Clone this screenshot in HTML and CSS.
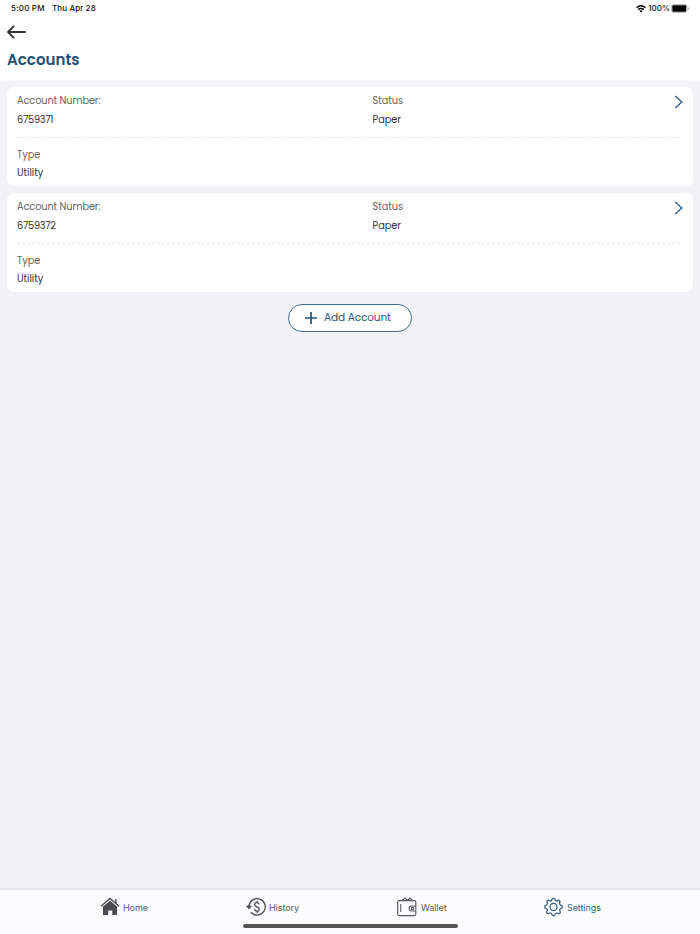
FILE: index.html
```html
<!DOCTYPE html>
<html lang="en">
<head>
<meta charset="utf-8">
<title>Accounts</title>
<link rel="stylesheet" href="styles.css">
</head>
<body>
<header class="header">
  <div class="statusbar">
    <span class="time">5:00 PM</span><span class="date">Thu Apr 28</span>
    <svg class="wifi" width="10" height="8" viewBox="0 0 10 8"><g fill="none" stroke="#000" stroke-width="1.4"><path d="M.6 2.7Q5-1 9.4 2.7M2.2 4.6Q5 2.3 7.8 4.6"/></g><path d="M3.4 5.9Q5 4.7 6.6 5.9L5 7.6z"/></svg>
    <span class="percent">100%</span>
    <svg class="battery" width="18" height="9" viewBox="0 0 18 9"><rect x=".5" y=".5" width="15.5" height="8" rx="2.2" fill="#fff" stroke="#bbb"/><rect x="1.3" y="1.3" width="13.9" height="6.4" rx="1"/><path d="M17 3v3q1-.4 1-1.5T17 3z" fill="#aaa"/></svg>
  </div>
  <svg class="back" width="19" height="14" viewBox="0 0 19 14" fill="none" stroke="#333" stroke-width="1.8" stroke-linecap="round" stroke-linejoin="round"><path d="M18 7H1.2M6.6 1.3L1 7l5.6 5.7"/></svg>
  <h1 class="title">Accounts</h1>
</header>
<main class="content">
  <section class="card">
    <div class="row">
      <div class="field"><span class="label number-label">Account Number:</span><span class="value number-value">6759371</span></div>
      <div class="field"><span class="label">Status</span><span class="value">Paper</span></div>
      <svg class="chevron" width="9" height="14" viewBox="0 0 9 14"><path d="M1.2 1l6.6 6-6.6 6" fill="none" stroke="#2a5784" stroke-width="1.3"/></svg>
    </div>
    <div class="divider"></div>
    <div class="field"><span class="label">Type</span><span class="value">Utility</span></div>
  </section>
  <section class="card">
    <div class="row">
      <div class="field"><span class="label number-label">Account Number:</span><span class="value number-value">6759372</span></div>
      <div class="field"><span class="label">Status</span><span class="value">Paper</span></div>
      <svg class="chevron" width="9" height="14" viewBox="0 0 9 14"><path d="M1.2 1l6.6 6-6.6 6" fill="none" stroke="#2a5784" stroke-width="1.3"/></svg>
    </div>
    <div class="divider"></div>
    <div class="field"><span class="label">Type</span><span class="value">Utility</span></div>
  </section>
  <button class="add"><svg width="12" height="12" viewBox="0 0 12 12"><path d="M6 0v12M0 6h12" stroke="#24517f" stroke-width="1.7"/></svg><span>Add Account</span></button>
</main>
<footer class="footer">
  <nav class="tabs">
    <a class="tab home"><svg width="20" height="19" viewBox="0 0 20 19"><path d="M3 9.6L10 3.7l7 5.9V18h-4.7v-4.6H8.2V18H3z" fill="#4b4b4d"/><path d="M.9 9.2l9.1-7.7 9.1 7.7M15.9 2v4.2" fill="none" stroke="#4b4b4d" stroke-width="1.4"/></svg><span>Home</span></a>
    <a class="tab history"><svg width="20" height="20" viewBox="0 0 20 20" fill="none" stroke="#4b4b4d" stroke-width="1.3"><path d="M2.9 9.5a8.2 8.2 0 1 1 2 5.8"/><path d="M.4 9h5L3 12z" fill="#4b4b4d" stroke-width=".7"/><path d="M13.1 7.4C12.5 5.1 8.6 5.2 8.6 7.4c0 2.8 4.8 2.1 4.8 4.9 0 2.5-4.4 2.5-5-.1M11 4V5.7M11 14v2" stroke-width="1.3"/></svg><span>History</span></a>
    <a class="tab wallet"><svg width="20" height="20" viewBox="0 0 20 20" fill="none" stroke="#565658" stroke-width="1.1"><path d="M18.8 9V5.1a1.5 1.5 0 0 0-1.5-1.5H2.3A1.6 1.6 0 0 0 .7 5.2v11.7a1.7 1.7 0 0 0 1.7 1.7h14.9a1.5 1.5 0 0 0 1.5-1.5V14M3.8 7v8M18.8 9h-5a1.5 1.5 0 0 0-1.5 1.5v2A1.5 1.5 0 0 0 13.8 14h5zM5 3.5L8.2 1l2.2 2.4L13 1l2.5 2.5M18.8 9v5"/><rect x="14.4" y="10.6" width="2" height="2"/></svg><span>Wallet</span></a>
    <a class="tab settings"><svg width="19" height="20" viewBox="0 0 20 20" fill="none" stroke="#315c88" stroke-width="1.3" stroke-linejoin="round"><path d="M8.2 2.6Q8.5 1 10 1t1.8 1.6q.2 1.2 1.2 1.3.8-.1 1.4-.7 1-.7 2 .2t.3 2q-.9 1 .2 2 .4.7 1.1.8 1.3.4 1.3 1.8t-1.5 1.8q-1.2.3-1.3 1.2-.2.8.4 1.5.8 1.1-.2 2t-2 .2q-.9-.8-1.7-.4-.9.3-1.2 1.4Q11.5 19 10 19t-1.8-1.3q-.3-1.2-1.2-1.4-.8-.4-1.7.4-1 .7-2-.2t-.2-2q.6-.7.4-1.5-.1-.9-1.3-1.2Q.7 11.4.7 10T2 8.2q.7-.1 1.1-.8 1.1-1 .2-2-.7-1.1.3-2t2-.2q.6.6 1.4.7 1-.1 1.2-1.3z"/><circle cx="10" cy="10" r="3.7"/></svg><span>Settings</span></a>
  </nav>
  <div class="indicator"></div>
</footer>
</body>
</html>
```
FILE: styles.css
```css
* { box-sizing: border-box; }
body { margin: 0; height: 934px; display: flex; flex-direction: column; background: #f1f1f6; color: #333; font-family: Poppins, Inter, sans-serif; overflow: hidden; }
.header { height: 81px; background: #fff; border-bottom: 1px solid #f8f8fa; flex: none; }
.statusbar { height: 17px; padding: 0 11px; display: flex; align-items: center; font: 500 8px/17px Inter, sans-serif; color: #111; }
.time { width: 41px; letter-spacing: .2px; white-space: nowrap; }
.date { letter-spacing: .1px; }
.wifi { margin-left: auto; }
.percent { margin: 0 1px 0 2px; letter-spacing: .05px; }
.back { display: block; margin: 8px 0 0 7px; }
.title { margin: 10px 0 0 7px; font-size: 15px; line-height: 22px; font-weight: 600; letter-spacing: .04px; color: #214d7b; }
.content { flex: 1; padding: 6.4px 7px 0; }
.card { height: 99px; margin-bottom: 7px; border-radius: 7px; background: #fff; padding: 5px 10px 0; }
.row { display: grid; grid-template-columns: 355.5px 1fr 9px; height: 44.5px; }
.field { display: flex; flex-direction: column; align-items: flex-start; font-size: 9.8px; line-height: 18.5px; letter-spacing: -.04px; }
.label { color: #626262; }
.value { color: #333; }
.number-label { letter-spacing: -.12px; }
.number-value { letter-spacing: -.28px; }
.chevron { margin-top: 2.6px; }
.divider { height: 1px; margin-bottom: 8px; background: repeating-linear-gradient(90deg, #e6e6e8 0 3px, transparent 3px 5px); }
.add { display: flex; align-items: center; width: 124px; height: 28px; margin: 11.6px auto 0; padding: 0 0 0 16px; border: 1px solid #456b93; border-radius: 14px; background: #fff; color: #2b547e; font: 400 10.6px/18px Poppins, Inter, sans-serif; letter-spacing: -.16px; }
.add span { margin-left: 7px; white-space: nowrap; }
.footer { height: 46px; flex: none; border-top: 2px solid #e5e5eb; background: #fcfcfe; }
.tabs { display: flex; height: 34px; }
.tab { display: flex; align-items: center; gap: 3px; font: 400 9px/14px Inter, sans-serif; letter-spacing: -.08px; color: #58585a; white-space: nowrap; }
.tab svg { margin-top: -1px; }
.tab span { margin-top: 1px; }
.home { width: 146px; margin-left: 100px; }
.history { width: 151px; }
.wallet { width: 147px; gap: 4px; }
.settings { color: #365f89; gap: 4px; }
.indicator { width: 215px; height: 4px; margin: 0 auto; border-radius: 2px; background: #565656; }
```
